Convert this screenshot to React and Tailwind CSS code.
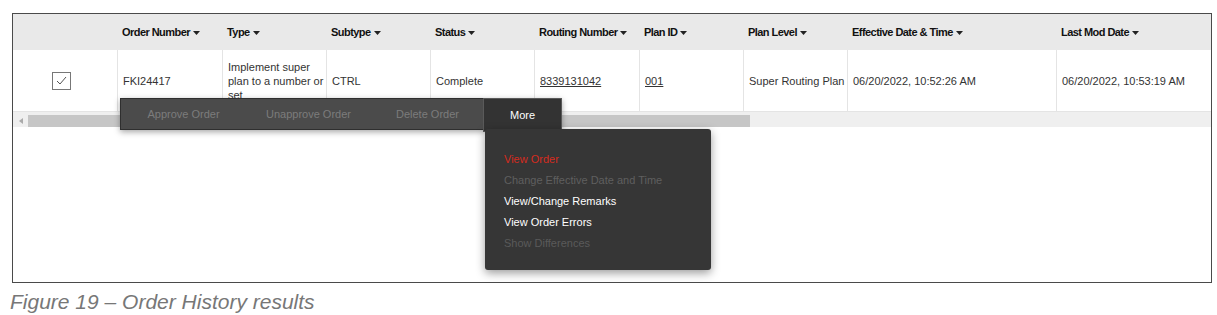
const columns = [
  { label: "Order Number", w: "w-[105px]" },
  { label: "Type", w: "w-[104px]" },
  { label: "Subtype", w: "w-[104px]" },
  { label: "Status", w: "w-[104px]" },
  { label: "Routing Number", w: "w-[105px]" },
  { label: "Plan ID", w: "w-[104px]" },
  { label: "Plan Level", w: "w-[104px]" },
  { label: "Effective Date & Time", w: "w-[209px]" },
  { label: "Last Mod Date", w: "flex-1" },
];

const menuItems = [
  { label: "View Order", cls: "text-[#d52b1e]" },
  { label: "Change Effective Date and Time", cls: "text-[#5f5f5f]" },
  { label: "View/Change Remarks", cls: "text-white" },
  { label: "View Order Errors", cls: "text-white" },
  { label: "Show Differences", cls: "text-[#5a5a5a]" },
];

function SortArrow() {
  return (
    <svg width="7" height="4" viewBox="0 0 7 4" className="ml-[3px] mt-[1px] inline-block">
      <path d="M0 0h7L3.5 4z" fill="#222" />
    </svg>
  );
}

function Cell({ w, children, className = "" }) {
  return (
    <div
      className={`${w} flex items-center border-l border-[#e4e4e4] pl-[5px] ${className}`}
    >
      {children}
    </div>
  );
}

export default function App() {
  return (
    <div
      className="bg-white pl-[12px] pt-[13px] w-[1217px] h-[315px] text-[#333]"
      style={{ fontFamily: '"Liberation Sans", Arial, sans-serif' }}
    >
      <div className="relative w-[1200px] h-[270px] border-[1.5px] border-[#4a4a4a]">
        {/* header */}
        <div className="flex h-[36px] bg-[#e9e9e9] text-[11px] font-bold tracking-[-0.55px] text-[#111]">
          <div className="w-[104px]" />
          {columns.map((c) => (
            <div key={c.label} className={`${c.w} flex items-center pl-[5px]`}>
              {c.label}
              <SortArrow />
            </div>
          ))}
        </div>

        {/* data row */}
        <div className="flex h-[62px] text-[11px] leading-[14px] border-b border-[#e4e4e4]">
          <div className="w-[104px] flex items-center pl-[39px]">
            <div className="w-[19px] h-[18px] border border-[#777] bg-white flex items-center justify-center">
              <svg width="11" height="9" viewBox="0 0 11 9">
                <path d="M1 5l3 3 6-7" fill="none" stroke="#555" strokeWidth="1" />
              </svg>
            </div>
          </div>
          <Cell w="w-[105px]">FKI24417</Cell>
          <Cell w="w-[104px]">Implement super plan to a number or set</Cell>
          <Cell w="w-[104px]">CTRL</Cell>
          <Cell w="w-[104px]">Complete</Cell>
          <Cell w="w-[105px]">
            <span className="underline">8339131042</span>
          </Cell>
          <Cell w="w-[104px]">
            <span className="underline">001</span>
          </Cell>
          <Cell w="w-[104px]" className="whitespace-nowrap">Super Routing Plan</Cell>
          <Cell w="w-[209px]">06/20/2022, 10:52:26 AM</Cell>
          <Cell w="flex-1">06/20/2022, 10:53:19 AM</Cell>
        </div>

        {/* scroll bar */}
        <div className="flex items-end h-[15px] bg-[#efefef]">
          <div className="w-[15px] h-[12px] flex items-center justify-center">
            <svg width="4" height="6" viewBox="0 0 4 6">
              <path d="M4 0v6L0 3z" fill="#aaa" />
            </svg>
          </div>
          <div className="w-[722px] h-[12px] bg-[#c6c6c6]" />
        </div>

        {/* action toolbar */}
        <div className="absolute left-[107px] top-[84px] w-[442px] h-[32px] bg-[#4b4b4b] border border-[#2f2f2f] shadow-[0_2px_6px_rgba(0,0,0,0.35)] flex items-center text-[11px] text-[#7c7c7c]">
          <div className="w-[125px] text-center">Approve Order</div>
          <div className="w-[125px] text-center">Unapprove Order</div>
          <div className="w-[113px] text-center">Delete Order</div>
        </div>
        <div className="absolute left-[470px] top-[84px] w-[79px] h-[34px] bg-[#333] border border-[#5a5a5a] flex items-center justify-center text-[11px] text-white">
          More
        </div>

        {/* more menu */}
        <div className="absolute left-[472px] top-[115px] w-[226px] h-[141px] bg-[#363636] rounded-[3px] shadow-[0_3px_10px_rgba(0,0,0,0.4)] pt-[20px] pl-[19px] text-[11px] leading-[21px]">
          {menuItems.map((m) => (
            <div key={m.label} className={m.cls}>
              {m.label}
            </div>
          ))}
        </div>
      </div>

      <div className="mt-[3px] -ml-[2px] text-[21px] italic text-[#777]">
        Figure 19 – Order History results
      </div>
    </div>
  );
}
